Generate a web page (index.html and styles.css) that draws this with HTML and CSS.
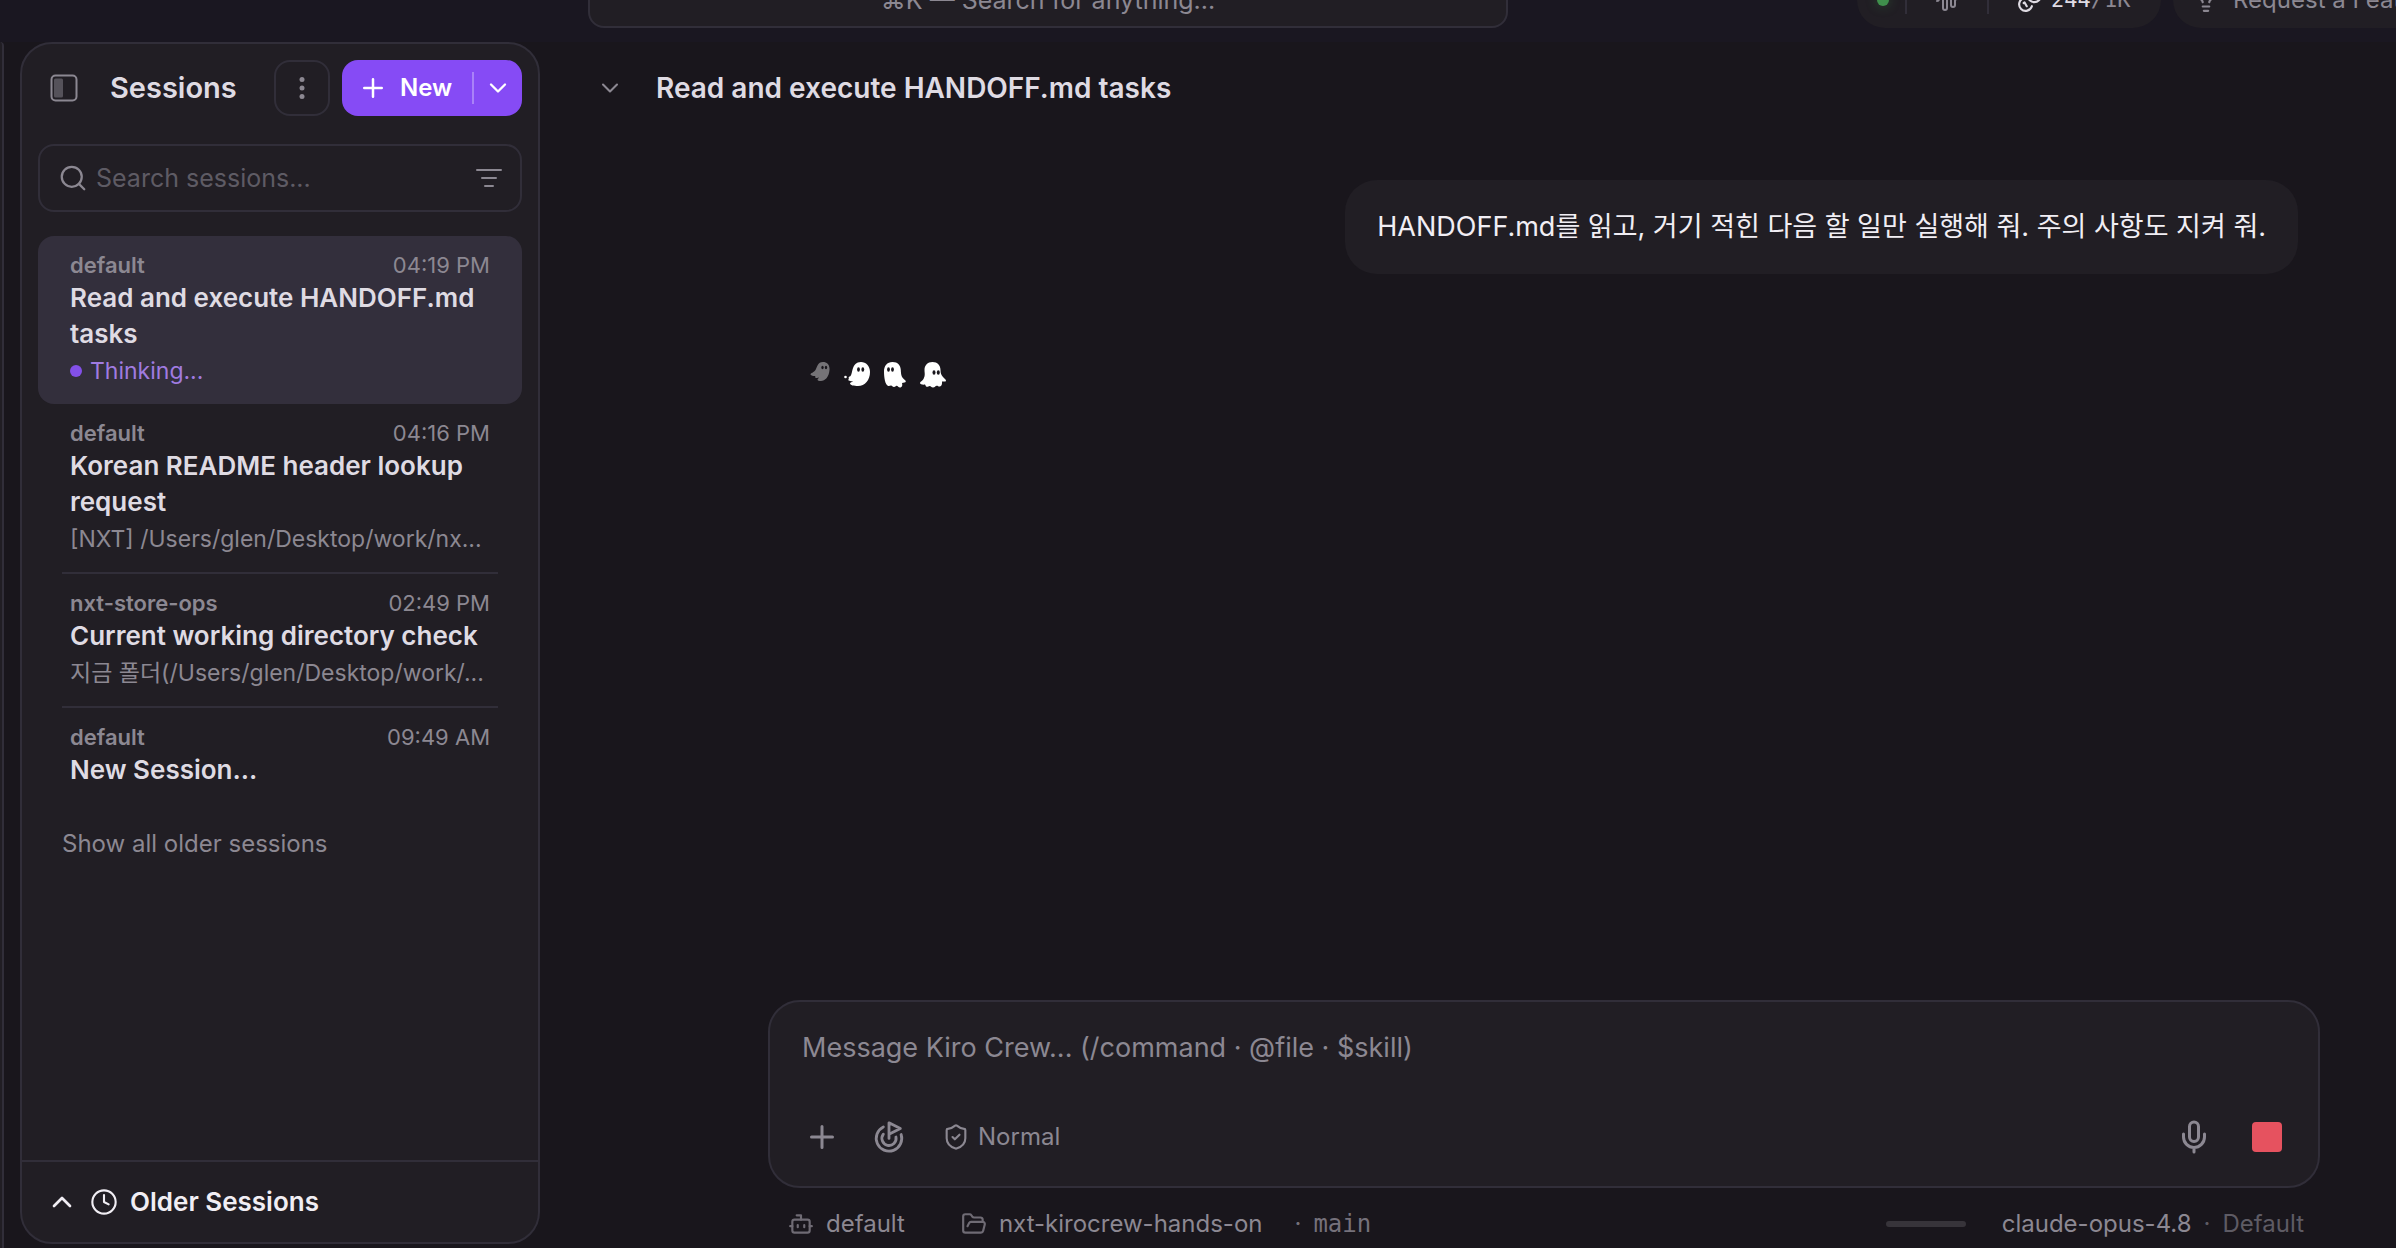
FILE: index.html
```html
<!DOCTYPE html>
<html lang="en">
<head>
<meta charset="utf-8">
<meta name="viewport" content="width=device-width, initial-scale=1">
<title>Kiro Crew</title>
<link rel="stylesheet" href="styles.css">
</head>
<body>
<header class="topbar">
  <button class="command" type="button">⌘K — Search for anything...</button>
  <div class="topbar-tools">
    <div class="pill">
      <span class="online"></span>
      <span class="rule"></span>
      <svg class="icon wave" width="24" height="24" viewBox="0 0 24 24"><path d="M2 13a2 2 0 0 0 2-2V7a2 2 0 0 1 4 0v13a2 2 0 0 0 4 0V4a2 2 0 0 1 4 0v13a2 2 0 0 0 4 0v-4a2 2 0 0 1 2-2"/></svg>
      <span class="rule"></span>
      <svg class="icon coins" width="26" height="26" viewBox="0 0 24 24"><path d="M13.744 17.736a6 6 0 1 1-7.48-7.48M15 6h1v4M6.134 14.768l.866-.5 2 3.464"/><circle cx="16" cy="8" r="6"/></svg>
      <span class="credits"><b>244</b>/1K</span>
    </div>
    <button class="pill request" type="button">
      <svg class="icon" width="26" height="26" viewBox="0 0 24 24"><path d="M15 14c.2-1 .7-1.7 1.5-2.5 1-.9 1.5-2.2 1.5-3.5A6 6 0 0 0 6 8c0 1 .2 2.2 1.5 3.5.7.7 1.3 1.5 1.5 2.5M9 18h6M10 22h4"/></svg>
      Request a Feature
    </button>
  </div>
</header>

<div class="workspace">
  <div class="rail"></div>

  <aside class="sessions">
    <div class="sessions-head">
      <button class="bare" type="button" aria-label="Toggle sidebar">
        <svg class="icon" width="28" height="28" viewBox="0 0 28 28"><rect x="1.5" y="1.5" width="25" height="25" rx="4"/><rect x="4" y="4.500" width="9" height="19" rx="1.500" fill="#55525a" stroke="none"/></svg>
      </button>
      <h1>Sessions</h1>
      <button class="more" type="button" aria-label="More options">
        <svg width="6" height="22" viewBox="0 0 6 22" fill="currentColor"><circle cx="3" cy="2.500" r="2.500"/><circle cx="3" cy="11" r="2.500"/><circle cx="3" cy="19.500" r="2.500"/></svg>
      </button>
      <div class="new">
        <button class="new-main" type="button">
          <svg class="icon" width="30" height="30" viewBox="0 0 24 24"><path d="M5 12h14M12 5v14"/></svg>
          New
        </button>
        <button class="new-menu" type="button" aria-label="New session options">
          <svg class="icon" width="28" height="28" viewBox="0 0 24 24"><path d="m6 9 6 6 6-6"/></svg>
        </button>
      </div>
    </div>

    <div class="search">
      <svg class="icon" width="30" height="30" viewBox="0 0 24 24" stroke-width="1.800"><circle cx="11" cy="11" r="8"/><path d="m21 21-4.300-4.300"/></svg>
      <input type="text" aria-label="Search sessions" placeholder="Search sessions...">
      <button class="bare" type="button" aria-label="Filter">
        <svg class="icon" width="26" height="20" viewBox="0 0 26 20"><path d="M1 2h24M6 10h14M9 18h8"/></svg>
      </button>
    </div>

    <ul class="list">
      <li class="item active">
        <div class="meta"><b>default</b><time>04:19 PM</time></div>
        <h2>Read and execute HANDOFF.md tasks</h2>
        <p class="thinking">Thinking...</p>
      </li>
      <li class="item">
        <div class="meta"><b>default</b><time>04:16 PM</time></div>
        <h2>Korean README header lookup request</h2>
        <p>[NXT] /Users/glen/Desktop/work/nx...</p>
      </li>
      <li class="item">
        <div class="meta"><b>nxt-store-ops</b><time>02:49 PM</time></div>
        <h2>Current working directory check</h2>
        <p>지금 폴더(/Users/glen/Desktop/work/...</p>
      </li>
      <li class="item">
        <div class="meta"><b>default</b><time>09:49 AM</time></div>
        <h2>New Session...</h2>
      </li>
    </ul>
    <button class="show-all" type="button">Show all older sessions</button>

    <button class="older" type="button">
      <svg class="icon" width="32" height="32" viewBox="0 0 24 24"><path d="m6 15 6-6 6 6"/></svg>
      <svg class="icon" width="28" height="28" viewBox="0 0 24 24" stroke-width="1.800"><circle cx="12" cy="12" r="10"/><path d="M12 6v6l4 2"/></svg>
      Older Sessions
    </button>
  </aside>

  <main class="chat">
    <div class="chat-head">
      <button class="bare" type="button" aria-label="Collapse">
        <svg class="icon" width="28" height="28" viewBox="0 0 24 24" stroke-width="1.800"><path d="m6 9 6 6 6-6"/></svg>
      </button>
      <h2>Read and execute HANDOFF.md tasks</h2>
    </div>

    <div class="thread">
      <p class="bubble" lang="ko">HANDOFF.md를 읽고, 거기 적힌 다음 할 일만 실행해 줘. 주의 사항도 지켜 줘.</p>
      <div class="ghosts" role="img" aria-label="Working">
        <svg class="faint" width="20" height="20" viewBox="0 0 20 20"><path d="M13 0c4 0 7 3 6.500 8-.5 7-4.500 11-8.500 11-2 0-3.500-.5-3.500-1.500 0-.8 1.500-1 1.500-2-1 .5-2.500.6-3.500.2-.7-.4 0-1.200-.3-1.700-1.200.3-3.700-.3-4.700-1.500-.7-1 3.500-2 5-4.500C7.200 5 7.500 0 13 0z"/><ellipse class="eye" cx="12.500" cy="5.500" rx="1.200" ry="1.700"/><ellipse class="eye" cx="16" cy="5.500" rx="1.200" ry="1.700"/></svg>
        <svg width="26" height="24" viewBox="0 0 26 24"><path d="M17 0c5 0 9 4 9 10 0 8-5 14-12 14-4 0-8-.8-8-2.500 0-1.500 2.500-1 3-2.500-1.500.3-4 .3-4.500-.7-.5-.9.700-1.600.3-2.300-.7-1 .5-1.300 1.500-1.800C9 12.500 7 0 17 0z"/><circle cx="1.500" cy="15" r="1.300"/><ellipse class="eye" cx="14.500" cy="7.500" rx="1.400" ry="2.200"/><ellipse class="eye" cx="18.800" cy="7.500" rx="1.400" ry="2.200"/></svg>
        <svg width="22" height="26" viewBox="0 0 22 26"><path d="M8.500 0c5.500 0 8 3.500 8.300 8 .2 5 .8 7 2.700 8.800 1 1 2.500 1.800 2.300 2.800-.2 1.200-2.300 1.200-3.800 1.400.5 1.500.5 4-1.500 4.500-2 .4-2.500-1.800-4-1.700-1 .1-1 1.200-2.500 1.200-1.700 0-1.700-1.500-3-1.500-1 0-1.500.8-2.700.4C1 23 0 15 0 9.500 0 4 3 0 8.500 0z"/><ellipse class="eye" cx="4.500" cy="7.500" rx="1.400" ry="2.200"/><ellipse class="eye" cx="8.500" cy="7.500" rx="1.400" ry="2.200"/></svg>
        <svg width="26" height="26" viewBox="0 0 26 26"><path d="M12.500 0c5 0 8 3.500 8 8 0 3.500.8 5 2.500 7 1.200 1.300 3 2.500 3 3.700 0 1-2.500 1-4 .8.200 2 0 4.500-2 5-1.500.3-2-.8-3.300-.7-1.500.1-1.700 1.700-3.700 1.700-1.800 0-2-1.500-3.300-1.500-1.200 0-2 1.200-3.200.7-1-.5-1-1.700-1.500-2.200-1.500.3-5 .2-5-1.500 0-1.500 2.500-2 3.500-4C5.500 13 4.500 11.500 4.500 8c0-4.500 3-8 8-8z"/><ellipse class="eye" cx="14" cy="10.500" rx="1.500" ry="2.200"/><ellipse class="eye" cx="18.300" cy="10.500" rx="1.500" ry="2.200"/></svg>
      </div>
    </div>

    <form class="composer">
      <textarea rows="1" aria-label="Message" placeholder="Message Kiro Crew... (/command · @file · $skill)"></textarea>
      <div class="tools">
        <button class="bare" type="button" aria-label="Attach"><svg class="icon" width="36" height="36" viewBox="0 0 24 24"><path d="M5 12h14M12 5v14"/></svg></button>
        <button class="bare" type="button" aria-label="Goal"><svg class="icon" width="34" height="34" viewBox="0 0 24 24"><path d="M12 13V2l8 4-8 4M20.561 10.222a9 9 0 1 1-12.550-5.290M8.002 9.997a5 5 0 1 0 8.900 2.020"/></svg></button>
        <button class="bare mode" type="button"><svg class="icon" width="28" height="28" viewBox="0 0 24 24" stroke-width="1.800"><path d="M20 13c0 5-3.500 7.500-7.660 8.950a1 1 0 0 1-.67-.01C7.500 20.500 4 18 4 13V6a1 1 0 0 1 1-1c2 0 4.500-1.200 6.240-2.720a1.170 1.170 0 0 1 1.520 0C14.510 3.810 17 5 19 5a1 1 0 0 1 1 1zM9 12l2 2 4-4"/></svg>Normal</button>
        <button class="bare mic" type="button" aria-label="Dictate"><svg class="icon" width="36" height="36" viewBox="0 0 24 24"><path d="M12 2a3 3 0 0 0-3 3v7a3 3 0 0 0 6 0V5a3 3 0 0 0-3-3ZM19 10v2a7 7 0 0 1-14 0v-2M12 19v3"/></svg></button>
        <button class="stop" type="button" aria-label="Stop"></button>
      </div>
    </form>

    <footer class="status">
      <button class="bare" type="button"><svg class="icon dim" width="26" height="26" viewBox="0 0 24 24"><path d="M12 8V4H8M2 14h2M20 14h2M15 13v2M9 13v2"/><rect x="4" y="8" width="16" height="12" rx="2"/></svg>default</button>
      <button class="bare folder" type="button"><svg class="icon dim" width="26" height="26" viewBox="0 0 24 24"><path d="m6 14 1.500-2.900A2 2 0 0 1 9.240 10H20a2 2 0 0 1 1.940 2.500l-1.540 6a2 2 0 0 1-1.950 1.500H4a2 2 0 0 1-2-2V5a2 2 0 0 1 2-2h3.900a2 2 0 0 1 1.690.9l.81 1.200a2 2 0 0 0 1.670.9H18a2 2 0 0 1 2 2v2"/></svg>nxt-kirocrew-hands-on</button>
      <span class="branch"><i>·</i><code>main</code></span>
      <span class="meter"></span>
      <button class="bare model" type="button">claude-opus-4.8<i>·</i><span>Default</span></button>
    </footer>
  </main>
</div>
</body>
</html>
```
FILE: styles.css
```css
:root {
  --bg: #19161c;
  --panel: #211e24;
  --line: #312e39;
  --text: #dfdbe3;
  --muted: #8c8892;
  --dim: #5e5b64;
  --accent: #864bf5;
  --mono: "DejaVu Sans Mono", monospace;
}

* { box-sizing: border-box; }

body {
  margin: 0;
  height: 100vh;
  display: flex;
  flex-direction: column;
  overflow: hidden;
  background: var(--bg);
  color: var(--text);
  font: 24px/36px Inter, "Noto Sans CJK KR", sans-serif;
}

h1, h2, p, ul { margin: 0; padding: 0; }
button, input, textarea { font: inherit; color: inherit; }
button { margin: 0; padding: 0; border: 0; background: none; cursor: pointer; }
i { font-style: normal; }

.icon {
  flex: none;
  display: block;
  fill: none;
  stroke: currentColor;
  stroke-width: 2;
  stroke-linecap: round;
  stroke-linejoin: round;
}
.icon[stroke-width] { stroke-width: 1.8; }

.bare {
  flex: none;
  display: flex;
  align-items: center;
  gap: 12px;
  color: var(--muted);
  white-space: nowrap;
}

.topbar {
  flex: none;
  height: 42px;
  padding: 0 0 14px 588px;
  display: flex;
  align-items: flex-end;
  justify-content: space-between;
  overflow: hidden;
  background: #1a1721;
}
.command {
  flex: 0 1 920px;
  height: 56px;
  border: 2px solid var(--line);
  border-radius: 16px;
  background: var(--panel);
  color: var(--muted);
  font-size: 25px;
}
.topbar-tools {
  flex: 0 0 539px;
  min-width: 0;
  display: flex;
  gap: 12px;
}
.pill {
  flex: none;
  width: 304px;
  height: 56px;
  padding-left: 20px;
  display: flex;
  align-items: center;
  border-radius: 28px;
  background: var(--panel);
  color: var(--muted);
}
.pill.request {
  width: 290px;
  gap: 14px;
  white-space: nowrap;
}
.online {
  width: 12px;
  height: 12px;
  border-radius: 50%;
  background: #3f8f4c;
  box-shadow: 0 0 12px #3f8f4c66;
}
.rule { width: 2px; height: 28px; margin-left: 16px; background: var(--line); }
.rule ~ .rule { margin-left: 28px; }
.wave { margin-left: 28px; }
.coins { margin: 0 8px 0 28px; color: var(--text); }
.credits { font: 22px/28px var(--mono); }
.credits b { font-weight: 400; color: var(--text); }

.workspace {
  flex: 1;
  min-height: 0;
  display: flex;
}
.rail {
  flex: 0 0 4px;
  border-right: 2px solid var(--line);
  border-top-right-radius: 32px;
  background: var(--panel);
}

/* Sessions panel */
.sessions {
  flex: 0 0 520px;
  min-width: 0;
  margin: 0 0 4px 16px;
  display: flex;
  flex-direction: column;
  border: 2px solid var(--line);
  border-radius: 32px;
  background: var(--panel);
}
.sessions-head {
  padding: 16px 16px 0 28px;
  display: flex;
  align-items: center;
}
.sessions-head h1 {
  flex: 1;
  margin-left: 32px;
  font-size: 29px;
  font-weight: 600;
}
.more {
  width: 56px;
  height: 56px;
  margin-right: 12px;
  display: grid;
  place-items: center;
  border: 2px solid var(--line);
  border-radius: 16px;
  color: var(--muted);
}
.new {
  width: 180px;
  height: 56px;
  display: flex;
  align-items: center;
  border-radius: 16px;
  background: var(--accent);
  color: #fff;
}
.new-main {
  flex: 1;
  padding-left: 16px;
  display: flex;
  align-items: center;
  gap: 12px;
  font-weight: 600;
}
.new-menu {
  width: 50px;
  height: 32px;
  display: grid;
  place-items: center;
  border-left: 2px solid #a981f8;
}

.search {
  height: 68px;
  margin: 28px 16px 24px;
  padding: 0 18px;
  display: flex;
  align-items: center;
  gap: 8px;
  border: 2px solid var(--line);
  border-radius: 16px;
  color: var(--muted);
}
.search input {
  flex: 1;
  min-width: 0;
  padding: 0;
  border: 0;
  outline: 0;
  background: none;
  font-size: 25px;
}
.search input::placeholder { color: var(--dim); opacity: 1; }

.list { list-style: none; padding: 0 16px; }
.item {
  margin: 0 24px;
  padding: 14px 8px;
}
.item + .item + .item { border-top: 2px solid var(--line); }
.item.active {
  margin: 0;
  padding: 14px 32px;
  border-radius: 16px;
  background: #332f3c;
}
.meta {
  display: flex;
  justify-content: space-between;
  font-size: 22px;
  line-height: 30px;
  color: var(--muted);
}
.meta b { font-weight: 600; }
.item h2 {
  font-size: 26px;
  font-weight: 600;
  line-height: 36px;
}
.item p {
  overflow: hidden;
  font-size: 23px;
  line-height: 38px;
  white-space: nowrap;
  text-overflow: ellipsis;
  color: var(--muted);
}
.item p.thinking {
  display: flex;
  align-items: center;
  gap: 8px;
  color: #a07be0;
}
.thinking::before {
  content: "";
  width: 12px;
  height: 12px;
  border-radius: 50%;
  background: #8350e8;
}
.show-all {
  margin: 16px 40px 0;
  padding: 8px 0;
  align-self: flex-start;
  color: var(--muted);
}
.older {
  height: 82px;
  margin-top: auto;
  padding-left: 24px;
  display: flex;
  align-items: center;
  gap: 12px;
  border-top: 2px solid var(--line);
  color: #f1eef4;
  font-size: 26px;
  font-weight: 600;
}

/* Conversation */
.chat {
  flex: 1;
  min-width: 0;
  display: flex;
  flex-direction: column;
}
.chat-head {
  padding: 28px 56px;
  display: flex;
  align-items: center;
  gap: 32px;
}
.chat-head h2 {
  font-size: 28px;
  font-weight: 600;
  line-height: 36px;
}
.thread {
  flex: 1;
  min-height: 0;
  margin: 46px 98px 0 228px;
  display: flex;
  flex-direction: column;
  align-items: flex-end;
}
.bubble {
  padding: 26px 32px;
  border-radius: 32px;
  background: var(--panel);
  color: #f1eef4;
  font-size: 27px;
  line-height: 42px;
}
.ghosts {
  align-self: flex-start;
  margin: 88px 0 0 42px;
  display: flex;
  gap: 14px;
}
.ghosts svg { fill: #fff; }
.ghosts .faint { opacity: .4; }
.ghosts .eye { fill: var(--bg); }

.composer {
  margin: 0 76px 0 228px;
  padding: 28px 36px 14px 32px;
  border: 2px solid var(--line);
  border-radius: 32px;
  background: var(--panel);
}
.composer textarea {
  display: block;
  width: 100%;
  height: 72px;
  padding: 0;
  border: 0;
  outline: 0;
  resize: none;
  background: none;
  font-size: 27px;
}
.composer textarea::placeholder { color: var(--muted); opacity: 1; }
.tools {
  height: 70px;
  padding-left: 2px;
  display: flex;
  align-items: center;
  gap: 32px;
}
.mode { gap: 8px; margin-left: 4px; }
.mic { margin-left: auto; }
.stop {
  width: 30px;
  height: 30px;
  margin-left: 8px;
  border-radius: 4px;
  background: #e6525f;
}

.status {
  height: 60px;
  margin: 0 92px 0 248px;
  padding-top: 18px;
  display: flex;
  align-items: flex-start;
}
.status .bare { line-height: 36px; }
.dim { opacity: .75; }
.folder { margin-left: 56px; }
.branch {
  margin-left: 32px;
  display: flex;
  gap: 12px;
  color: #75717b;
}
.branch code { font: 24px/36px var(--mono); }
.meter {
  width: 80px;
  height: 6px;
  margin: 15px 36px 0 auto;
  border-radius: 3px;
  background: #37343a;
}
.model i, .model span { color: var(--dim); }
```
